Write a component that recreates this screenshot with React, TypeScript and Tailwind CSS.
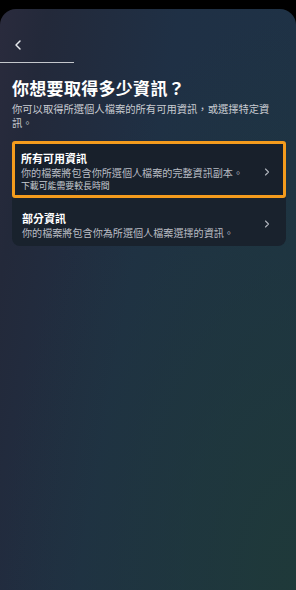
import { ChevronLeft, ChevronRight } from "lucide-react";

const font = { fontFamily: '"Noto Sans CJK TC", "Noto Sans", sans-serif' };

export default function App() {
  return (
    <main className="w-[296px] h-[590px] bg-black overflow-hidden" style={font}>
      <div className="mt-[9px] h-[581px] rounded-t-[16px] bg-[radial-gradient(ellipse_at_100%_100%,rgba(31,58,56,0.9),rgba(31,58,56,0)_70%),linear-gradient(100deg,#2a2b3d_0%,#23293a_12%,#1f3045_45%,#1e3346_100%)]">
        <div className="pt-[28px] pl-[10px] h-[53px]">
          <ChevronLeft className="w-[16px] h-[16px] text-[#e8eaee]" strokeWidth={2.2} />
        </div>
        <div className="w-[74px] h-px bg-[#c4c7cc]" />

        <div className="px-[12px] pt-[13px]">
          <h1 className="text-[17px] leading-[24px] font-bold text-white tracking-[0.3px]">
            你想要取得多少資訊？
          </h1>
          <p className="mt-[2px] w-[262px] text-[10.3px] leading-[14px] text-[#c9ccd2]">
            你可以取得所選個人檔案的所有可用資訊，或選擇特定資訊。
          </p>
        </div>

        <div className="mx-[12px] mt-[11px] w-[274px] rounded-[8px] bg-[#19222d]">
          <div className="flex items-center border-[3.5px] border-[#f39b1d] rounded-[3px] bg-[#18202b] pl-[6px] pr-[10px] pt-[7px] pb-[3px]">
            <div className="flex-1">
              <div className="text-[11px] leading-[15px] font-bold text-white">所有可用資訊</div>
              <div className="text-[10.1px] leading-[14px] text-[#b9bdc4]">
                你的檔案將包含你所選個人檔案的完整資訊副本。
              </div>
              <div className="text-[8.9px] leading-[12px] text-[#c8ccd2]">下載可能需要較長時間</div>
            </div>
            <ChevronRight className="w-[12px] h-[12px] text-[#b0b5bc]" strokeWidth={2.2} />
          </div>
          <div className="flex items-center pl-[10px] pr-[13px] pt-[13px] pb-[6px]">
            <div className="flex-1">
              <div className="text-[11px] leading-[15px] font-bold text-white">部分資訊</div>
              <div className="text-[10.1px] leading-[14px] text-[#b9bdc4]">
                你的檔案將包含你為所選個人檔案選擇的資訊。
              </div>
            </div>
            <ChevronRight className="w-[12px] h-[12px] text-[#b0b5bc] -mt-[4px]" strokeWidth={2.2} />
          </div>
        </div>
      </div>
    </main>
  );
}
